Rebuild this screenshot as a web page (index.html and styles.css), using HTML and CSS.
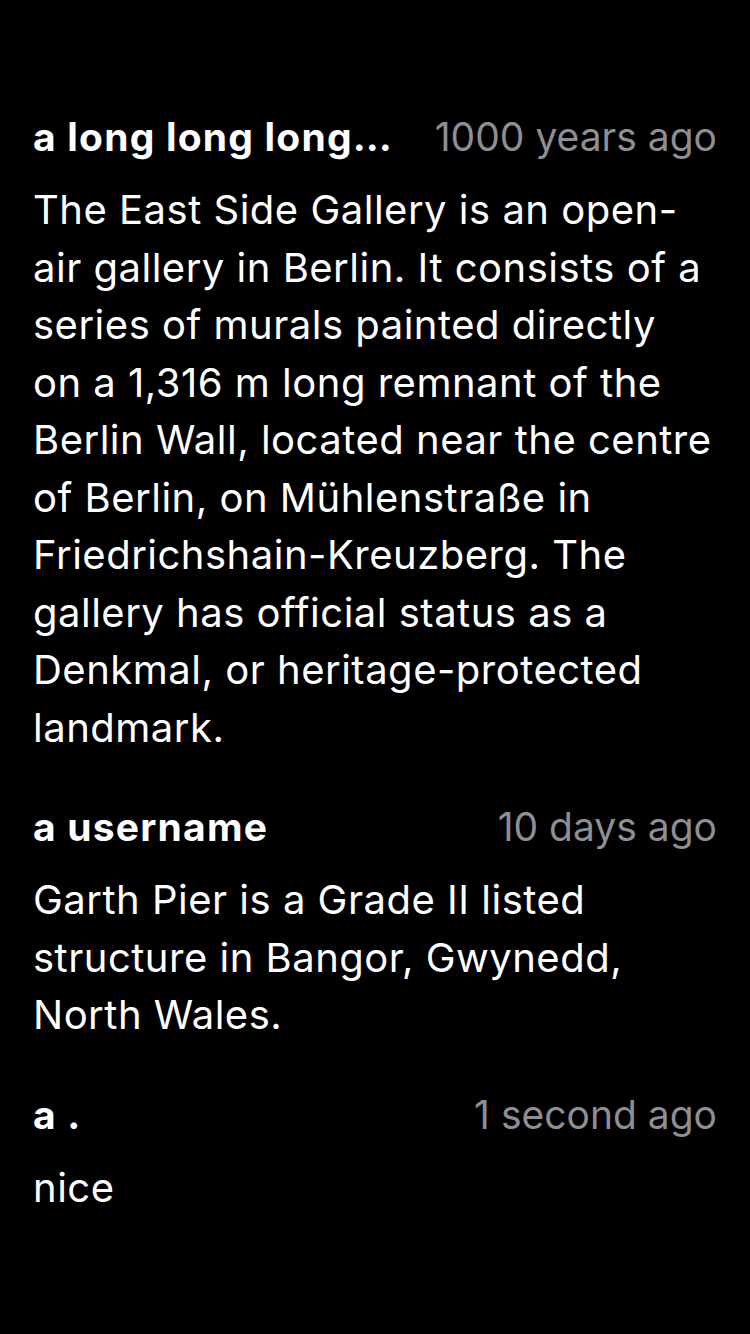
FILE: index.html
```html
<!DOCTYPE html>
<html>
<head>
<meta charset="utf-8">
<link rel="stylesheet" href="styles.css">
</head>
<body>
<main class="list">
  <article class="comment">
    <header class="head">
      <span class="user">a long long long…</span>
      <span class="time">1000 years ago</span>
    </header>
    <p class="text">The East Side Gallery is an open-<br>air gallery in Berlin. It consists of a<br>series of murals painted directly<br>on a 1,316 m long remnant of the<br>Berlin Wall, located near the centre<br>of Berlin, on Mühlenstraße in<br>Friedrichshain-Kreuzberg. The<br>gallery has official status as a<br>Denkmal, or heritage-protected<br>landmark.</p>
  </article>
  <article class="comment">
    <header class="head">
      <span class="user">a username</span>
      <span class="time">10 days ago</span>
    </header>
    <p class="text">Garth Pier is a Grade II listed<br>structure in Bangor, Gwynedd,<br>North Wales.</p>
  </article>
  <article class="comment">
    <header class="head">
      <span class="user">a .</span>
      <span class="time">1 second ago</span>
    </header>
    <p class="text">nice</p>
  </article>
</main>
</body>
</html>
```
FILE: styles.css
```css
html, body {
  margin: 0;
  background: #000;
}
body {
  width: 750px;
  height: 1334px;
  font-family: Inter, "Liberation Sans", sans-serif;
  color: #fff;
}
.list {
  padding: 114px 33px 0 33px;
  display: flex;
  flex-direction: column;
  gap: 48px;
}
.comment {
  display: flex;
  flex-direction: column;
  gap: 21px;
}
.head {
  display: flex;
  justify-content: space-between;
  align-items: center;
  height: 46px;
  font-size: 39px;
  line-height: 46px;
}
.user {
  font-weight: 700;
  letter-spacing: 1.2px;
}
.time {
  color: #8e8e93;
}
.text {
  margin: 0;
  font-size: 40px;
  line-height: 57.5px;
  letter-spacing: 0.5px;
  white-space: nowrap;
}
```
